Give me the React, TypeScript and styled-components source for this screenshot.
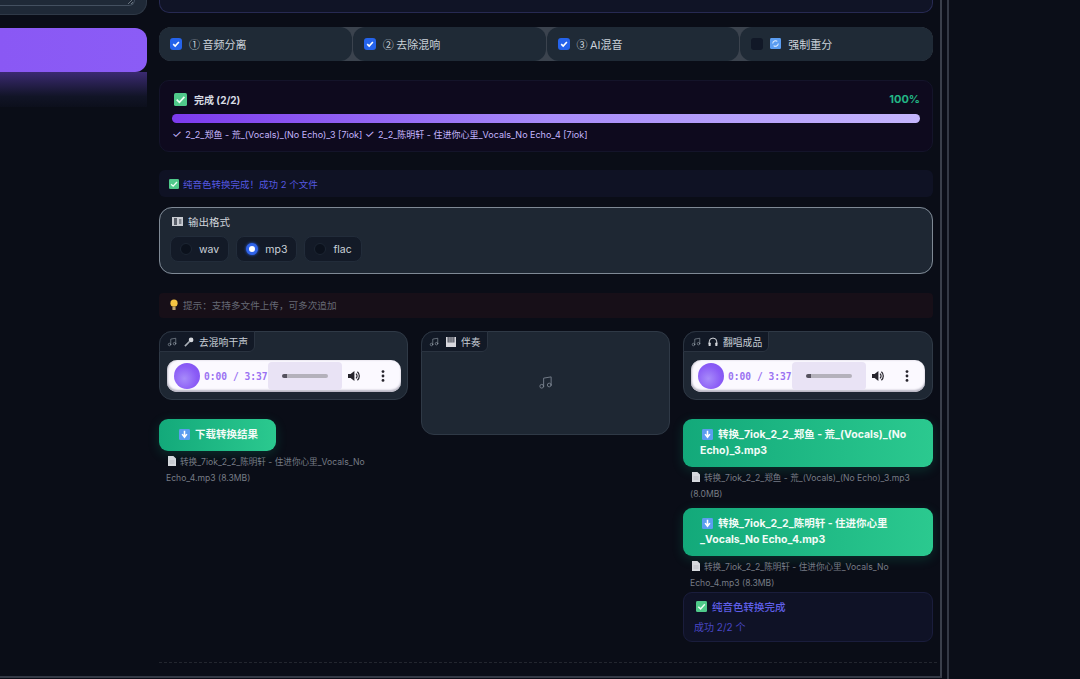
import React from "react";
import styled, { createGlobalStyle } from "styled-components";
import { Music } from "lucide-react";

const GlobalStyle = createGlobalStyle`
  html, body { margin: 0; padding: 0; background: #0a0d17; }
  body { font-family: Inter, "Noto Sans CJK SC", "Noto Sans", sans-serif; color: #d1d5db; }
  * { box-sizing: border-box; }
`;

const Page = styled.div`
  display: flex;
  width: 1080px;
  height: 679px;
  overflow: hidden;
  background: #0a0d17;
`;

const Shell = styled.div`
  display: flex;
  gap: 12px;
  flex: none;
  width: 942px;
  height: 678px;
  border-right: 2px solid #3a3f4b;
  border-bottom: 2px solid #343945;
`;

const Rail = styled.div`
  flex: 1;
  margin-left: 5px;
  height: 679px;
  border-left: 2px solid #343945;
  background: #0b0e18;
`;

const Side = styled.aside`
  flex: none;
  width: 147px;
`;

const PromptTail = styled.div`
  position: relative;
  height: 15px;
  background: #1f2937;
  border: 1px solid #2f3947;
  border-top: none;
  border-left: none;
  border-radius: 0 0 13px 0;
`;

const PromptField = styled.div`
  display: flex;
  justify-content: flex-end;
  align-items: flex-end;
  height: 6px;
  margin-right: 11px;
  padding: 0 1px 1px 0;
  border-bottom: 1px solid #445060;
  border-right: 1px solid #445060;
  border-radius: 0 0 6px 0;
  color: #8a939e;
`;

const RunButton = styled.div`
  height: 44px;
  margin-top: 13px;
  border-radius: 0 12px 12px 0;
  background: linear-gradient(90deg, #8a58f4, #8b5cf6);
`;

const RunGlow = styled.div`
  height: 35px;
  background: linear-gradient(180deg, #3b2a72, #111426 70%, #0c0f1c);
`;

const Main = styled.main`
  flex: none;
  width: 774px;
  display: flex;
  flex-direction: column;
`;

const TopCard = styled.div`
  height: 13px;
  background: #101426;
  border: 1px solid #272a52;
  border-top: none;
  border-radius: 0 0 10px 10px;
`;

const Checks = styled.div`
  display: grid;
  grid-template-columns: repeat(4, 1fr);
  gap: 1px;
  height: 34px;
  margin-top: 14px;
  border-radius: 12px;
  background: #3b434e;
  overflow: hidden;
`;

const CheckItem = styled.label`
  display: flex;
  align-items: center;
  gap: 7px;
  padding: 0 0 1px 11px;
  border-radius: 12px;
  background: #1f2a36;
  font-size: 11px;
  color: #cbd2da;
`;

const Numeral = styled.span`
  font-family: "Noto Sans CJK SC", sans-serif;
`;

const Box = styled.span<{ $on: boolean }>`
  display: flex;
  align-items: center;
  justify-content: center;
  flex: none;
  width: 12px;
  height: 12px;
  border-radius: 3px;
  background: ${(p) => (p.$on ? "#2563eb" : "#111827")};
`;

const IconWrap = styled.span`
  display: inline-flex;
  flex: none;
  vertical-align: -2px;
`;

const ProgressCard = styled.section`
  height: 72px;
  margin-top: 19px;
  padding: 10px 12px 0;
  border: 1px solid #14142a;
  border-radius: 10px;
  background: #0e0a1e;
`;

const ProgressHead = styled.div`
  display: flex;
  align-items: center;
  justify-content: space-between;
  height: 16px;
  padding-left: 2px;
`;

const ProgressTitle = styled.span`
  display: flex;
  align-items: center;
  gap: 7px;
  font-size: 10px;
  font-weight: 700;
  color: #d8dbe2;
`;

const Percent = styled.span`
  font-size: 11px;
  font-weight: 700;
  color: #22b685;
`;

const Bar = styled.div`
  height: 9px;
  margin-top: 7px;
  border-radius: 5px;
  background: linear-gradient(90deg, #7c3aed, #a78bfa 50%, #c4b5fd);
`;

const ProgressText = styled.div`
  margin-top: 4px;
  font-size: 9px;
  line-height: 14px;
  color: #c4b5fd;
  white-space: nowrap;
`;

const CheckGlyph = styled.span`
  font-size: 11px;
  margin-right: 1px;
`;

const Notice = styled.div`
  display: flex;
  align-items: center;
  gap: 4px;
  height: 27px;
  margin-top: 18px;
  padding-left: 10px;
  border-radius: 6px;
  background: #0f1224;
  font-size: 9.5px;
  color: #5558e0;
`;

const FormatCard = styled.fieldset`
  height: 67px;
  margin: 10px 0 0;
  padding: 6px 11px 0 10px;
  border: 1px solid #7f8995;
  border-radius: 13px;
  background: #1e2733;
`;

const FormatLabel = styled.div`
  display: flex;
  align-items: center;
  gap: 5px;
  height: 15px;
  padding-left: 2px;
  font-size: 10.5px;
  color: #d1d5db;
`;

const Radios = styled.div`
  display: flex;
  gap: 7px;
  margin-top: 7px;
`;

const RadioPill = styled.label`
  display: flex;
  align-items: center;
  gap: 7px;
  height: 26px;
  padding: 0 9px;
  border: 1px solid #222c3a;
  border-radius: 8px;
  background: #131a27;
  font-size: 10.5px;
  color: #cbd2da;
`;

const RadioDot = styled.span<{ $on: boolean }>`
  flex: none;
  width: 12px;
  height: 12px;
  border-radius: 50%;
  border: ${(p) => (p.$on ? "3px solid #2f63e8" : "1px solid #1c2532")};
  background: ${(p) => (p.$on ? "#fff" : "#0b111c")};
  box-shadow: ${(p) => (p.$on ? "0 0 3px #2f63e8" : "none")};
`;

const Tip = styled.div`
  display: flex;
  align-items: center;
  gap: 4px;
  height: 25px;
  margin-top: 19px;
  padding: 0 0 1px 10px;
  border-radius: 4px;
  background: #170f18;
  font-size: 9.6px;
  color: #666a75;
`;

const Columns = styled.div`
  display: grid;
  grid-template-columns: 249px 249px 250px;
  gap: 13px;
  margin-top: 13px;
`;

const Column = styled.div`
  display: flex;
  flex-direction: column;
  align-items: flex-start;
`;

const AudioBlock = styled.div<{ $tall?: boolean }>`
  position: relative;
  width: 100%;
  height: ${(p) => (p.$tall ? "104px" : "69px")};
  padding: 28px 7px 0;
  border: 1px solid #2f3946;
  border-radius: 13px;
  background: #1e2733;
`;

const BlockLabel = styled.div`
  position: absolute;
  top: -1px;
  left: -1px;
  display: flex;
  align-items: center;
  gap: 5px;
  height: 21px;
  padding: 0 6px 0 7px;
  border: 1px solid #2a3340;
  border-top-left-radius: 13px;
  border-bottom-right-radius: 6px;
  background: #121926;
  font-size: 9.8px;
  color: #c6ccd4;
  svg.note { color: #9aa3ae; margin-right: 2px; }
`;

const Player = styled.div`
  display: flex;
  align-items: center;
  width: 234px;
  height: 32px;
  padding-left: 7px;
  border-radius: 10px;
  background: #fbf9ff;
  box-shadow: inset 0 -2px 2px #b9b7c4, inset 1px 0 2px #c9c7d2;
`;

const PlayBall = styled.span`
  flex: none;
  width: 26px;
  height: 26px;
  border-radius: 50%;
  background: radial-gradient(circle at 40% 60%, #a78bfa, #8b5cf6 55%, #7c4df0);
`;

const PlayerTime = styled.span`
  flex: none;
  width: 64px;
  margin-left: 4px;
  font-family: "DejaVu Sans Mono", "Liberation Mono", monospace;
  font-size: 9.6px;
  font-weight: 700;
  color: #9a72f2;
  white-space: pre;
`;

const Seek = styled.span`
  flex: none;
  display: flex;
  align-items: center;
  justify-content: center;
  width: 74px;
  height: 28px;
  border-radius: 4px;
  background: #e9e3f5;
`;

const SeekTrack = styled.span`
  display: block;
  width: 46px;
  height: 4px;
  border-radius: 2px;
  background: linear-gradient(90deg, #55525e 5px, #b4b1bb 5px);
`;

const PlayerIcons = styled.span`
  flex: 1;
  display: flex;
  align-items: center;
  justify-content: space-between;
  padding: 0 16px 0 5px;
  color: #26242c;
`;

const EmptyIcon = styled.div`
  display: flex;
  justify-content: center;
  padding-top: 15px;
  color: #7b8591;
`;

const DownloadButton = styled.div<{ $wide?: boolean; $first?: boolean }>`
  width: ${(p) => (p.$wide ? "100%" : "117px")};
  margin-top: ${(p) => (p.$first ? "19px" : "6px")};
  padding: 8px 17px;
  border-radius: 9px;
  background: linear-gradient(90deg, #13a97a, #2bc98f);
  box-shadow: 0 3px 12px rgba(16, 185, 129, 0.2);
  font-size: 10.5px;
  font-weight: 700;
  line-height: 16px;
  color: #f2fbf7;
  text-align: ${(p) => (p.$wide ? "left" : "center")};
`;

const FileNote = styled.div`
  margin-top: 3px;
  padding: 0 7px;
  font-size: 8.6px;
  line-height: 16px;
  color: #777c86;
  svg { margin: 0 4px 0 2px; }
`;

const ResultCard = styled.div`
  width: 100%;
  height: 50px;
  margin-top: 1px;
  padding: 5px 10px;
  border: 1px solid #1a1d3c;
  border-radius: 9px;
  background: #0f1226;
`;

const ResultTitle = styled.div`
  display: flex;
  align-items: center;
  gap: 5px;
  height: 16px;
  padding-left: 2px;
  font-size: 10.5px;
  font-weight: 500;
  color: #5f5fe8;
`;

const ResultCount = styled.div`
  margin-top: 6px;
  font-size: 10px;
  line-height: 14px;
  color: #4846c4;
`;

const DashedRule = styled.hr`
  width: 778px;
  margin: 20px 0 0;
  border: none;
  border-top: 1px dashed #23262f;
`;

const Tick = () => (
  <svg width="8" height="8" viewBox="0 0 10 10">
    <path d="M1.5 5.2 4 7.6l4.6-5" fill="none" stroke="#fff" strokeWidth="2" />
  </svg>
);

const GreenCheck = ({ size = 11 }: { size?: number }) => (
  <IconWrap>
    <svg width={size} height={size} viewBox="0 0 12 12">
      <rect width="12" height="12" rx="1.5" fill="#4fc98a" />
      <path d="M2.5 6.2 5 8.6l4.6-5" fill="none" stroke="#eafff3" strokeWidth="1.6" />
    </svg>
  </IconWrap>
);

const BlueArrow = () => (
  <IconWrap>
    <svg width="11" height="11" viewBox="0 0 12 12" style={{ margin: "0 5px 0 2px" }}>
      <rect width="12" height="12" rx="1.5" fill="#5b9df0" />
      <path d="M6 2v5.5M3.4 5.6 6 9l2.6-3.4" fill="none" stroke="#fff" strokeWidth="1.7" />
    </svg>
  </IconWrap>
);

const DocIcon = () => (
  <svg width="8" height="10" viewBox="0 0 8 10" style={{ verticalAlign: -1 }}>
    <path d="M0 0h5.4L8 2.6V10H0z" fill="#d5d8dd" />
    <path d="M1.5 5h5M1.5 7h5" stroke="#a5a9b0" strokeWidth=".6" />
  </svg>
);

const RefreshIcon = () => (
  <IconWrap>
    <svg width="11" height="11" viewBox="0 0 12 12">
      <rect width="12" height="12" rx="1.5" fill="#5b9df0" />
      <path d="M3 6a3 3 0 0 1 5-2.2M9 6a3 3 0 0 1-5 2.2" fill="none" stroke="#e5f1ff" strokeWidth="1.1" />
    </svg>
  </IconWrap>
);

const BulbIcon = () => (
  <svg width="10" height="12" viewBox="0 0 10 12">
    <circle cx="5" cy="4.2" r="3.6" fill="#f5c542" />
    <rect x="3.4" y="8" width="3.2" height="3" rx=".6" fill="#b8a070" />
  </svg>
);

const FilmIcon = () => (
  <svg width="11" height="9" viewBox="0 0 11 9">
    <rect width="11" height="9" fill="#c9ccd2" />
    <rect x="2" y="1" width="3" height="7" fill="#5a5f69" />
    <rect x="7" y="2" width="2.4" height="5" fill="#7e838c" />
  </svg>
);

const MicIcon = () => (
  <svg width="10" height="10" viewBox="0 0 11 11">
    <path d="M1 10 6 5" stroke="#aab0b8" strokeWidth="1.8" />
    <circle cx="7.8" cy="3.2" r="2.6" fill="#d5d8dd" />
  </svg>
);

const PianoIcon = () => (
  <svg width="10" height="10" viewBox="0 0 10 10">
    <rect width="10" height="10" fill="#d8d8de" />
    <path d="M1.5 0h7v5.5h-7z" fill="#5b5f69" />
    <path d="M3.2 0v5.5M5 0v5.5M6.8 0v5.5" stroke="#d8d8de" strokeWidth=".5" />
  </svg>
);

const HeadphoneIcon = () => (
  <svg width="10" height="10" viewBox="0 0 11 11">
    <path d="M1.3 7V5.4a4.2 4.2 0 0 1 8.4 0V7" fill="none" stroke="#d5d8dd" strokeWidth="1.1" />
    <rect x=".6" y="6" width="2.4" height="4" rx="1" fill="#d5d8dd" />
    <rect x="8" y="6" width="2.4" height="4" rx="1" fill="#d5d8dd" />
  </svg>
);

const SpeakerIcon = () => (
  <svg width="14" height="14" viewBox="0 0 14 14">
    <path d="M1 5h2.6L7.4 2v10L3.6 9H1z" fill="currentColor" />
    <path d="M9 4.6a3.2 3.2 0 0 1 0 4.8M10.4 2.8a5.6 5.6 0 0 1 0 8.4" fill="none" stroke="currentColor" strokeWidth="1.2" />
  </svg>
);

const DotsIcon = () => (
  <svg width="4" height="12" viewBox="0 0 4 12">
    <circle cx="2" cy="1.6" r="1.4" fill="currentColor" />
    <circle cx="2" cy="6" r="1.4" fill="currentColor" />
    <circle cx="2" cy="10.4" r="1.4" fill="currentColor" />
  </svg>
);

const ResizeHandle = () => (
  <svg width="5" height="4" viewBox="0 0 5 4">
    <path d="M0 4 4 0M3 4l2-2" stroke="currentColor" strokeWidth=".7" />
  </svg>
);

const AudioPlayer = () => (
  <Player>
    <PlayBall />
    <PlayerTime>0:00 / 3:37</PlayerTime>
    <Seek>
      <SeekTrack />
    </Seek>
    <PlayerIcons>
      <SpeakerIcon />
      <DotsIcon />
    </PlayerIcons>
  </Player>
);

const Label = ({ icon, text }: { icon: React.ReactNode; text: string }) => (
  <BlockLabel>
    <Music className="note" size={10} strokeWidth={1.4} />
    {icon}
    <span>{text}</span>
  </BlockLabel>
);

const options = [
  { on: true, icon: null, num: "①", text: "音频分离" },
  { on: true, icon: null, num: "②", text: "去除混响" },
  { on: true, icon: null, num: "③", text: "AI混音" },
  { on: false, icon: <RefreshIcon />, num: "", text: "强制重分" },
];

const formats = ["wav", "mp3", "flac"];

export default function App() {
  return (
    <Page>
      <GlobalStyle />
      <Shell>
        <Side>
          <PromptTail>
            <PromptField>
              <ResizeHandle />
            </PromptField>
          </PromptTail>
          <RunButton />
          <RunGlow />
        </Side>
        <Main>
          <TopCard />
          <Checks>
            {options.map((o) => (
              <CheckItem key={o.text}>
                <Box $on={o.on}>{o.on && <Tick />}</Box>
                {o.icon}
                <span>
                  {o.num && <Numeral>{o.num} </Numeral>}
                  {o.text}
                </span>
              </CheckItem>
            ))}
          </Checks>
          <ProgressCard>
            <ProgressHead>
              <ProgressTitle>
                <GreenCheck size={13} />
                完成 (2/2)
              </ProgressTitle>
              <Percent>100%</Percent>
            </ProgressHead>
            <Bar />
            <ProgressText>
              <CheckGlyph>✓</CheckGlyph> 2_2_郑鱼 - 荒_(Vocals)_(No Echo)_3 [7iok] <CheckGlyph>✓</CheckGlyph> 2_2_陈明轩 - 住进你心里_Vocals_No Echo_4 [7iok]
            </ProgressText>
          </ProgressCard>
          <Notice>
            <GreenCheck size={10} />
            纯音色转换完成！成功 2 个文件
          </Notice>
          <FormatCard>
            <FormatLabel>
              <FilmIcon />
              输出格式
            </FormatLabel>
            <Radios>
              {formats.map((f) => (
                <RadioPill key={f}>
                  <RadioDot $on={f === "mp3"} />
                  {f}
                </RadioPill>
              ))}
            </Radios>
          </FormatCard>
          <Tip>
            <BulbIcon />
            提示：支持多文件上传，可多次追加
          </Tip>
          <Columns>
            <Column>
              <AudioBlock>
                <Label icon={<MicIcon />} text="去混响干声" />
                <AudioPlayer />
              </AudioBlock>
              <DownloadButton $first>
                <BlueArrow />
                下载转换结果
              </DownloadButton>
              <FileNote>
                <DocIcon />
                转换_7iok_2_2_陈明轩 - 住进你心里_Vocals_No Echo_4.mp3 (8.3MB)
              </FileNote>
            </Column>
            <Column>
              <AudioBlock $tall>
                <Label icon={<PianoIcon />} text="伴奏" />
                <EmptyIcon>
                  <Music size={15} strokeWidth={1.4} />
                </EmptyIcon>
              </AudioBlock>
            </Column>
            <Column>
              <AudioBlock>
                <Label icon={<HeadphoneIcon />} text="翻唱成品" />
                <AudioPlayer />
              </AudioBlock>
              <DownloadButton $wide $first>
                <BlueArrow />
                转换_7iok_2_2_郑鱼 - 荒_(Vocals)_(No Echo)_3.mp3
              </DownloadButton>
              <FileNote>
                <DocIcon />
                转换_7iok_2_2_郑鱼 - 荒_(Vocals)_(No Echo)_3.mp3 (8.0MB)
              </FileNote>
              <DownloadButton $wide>
                <BlueArrow />
                转换_7iok_2_2_陈明轩 - 住进你心里 _Vocals_No Echo_4.mp3
              </DownloadButton>
              <FileNote>
                <DocIcon />
                转换_7iok_2_2_陈明轩 - 住进你心里_Vocals_No Echo_4.mp3 (8.3MB)
              </FileNote>
              <ResultCard>
                <ResultTitle>
                  <GreenCheck />
                  纯音色转换完成
                </ResultTitle>
                <ResultCount>成功 2/2 个</ResultCount>
              </ResultCard>
            </Column>
          </Columns>
          <DashedRule />
        </Main>
      </Shell>
      <Rail />
    </Page>
  );
}
